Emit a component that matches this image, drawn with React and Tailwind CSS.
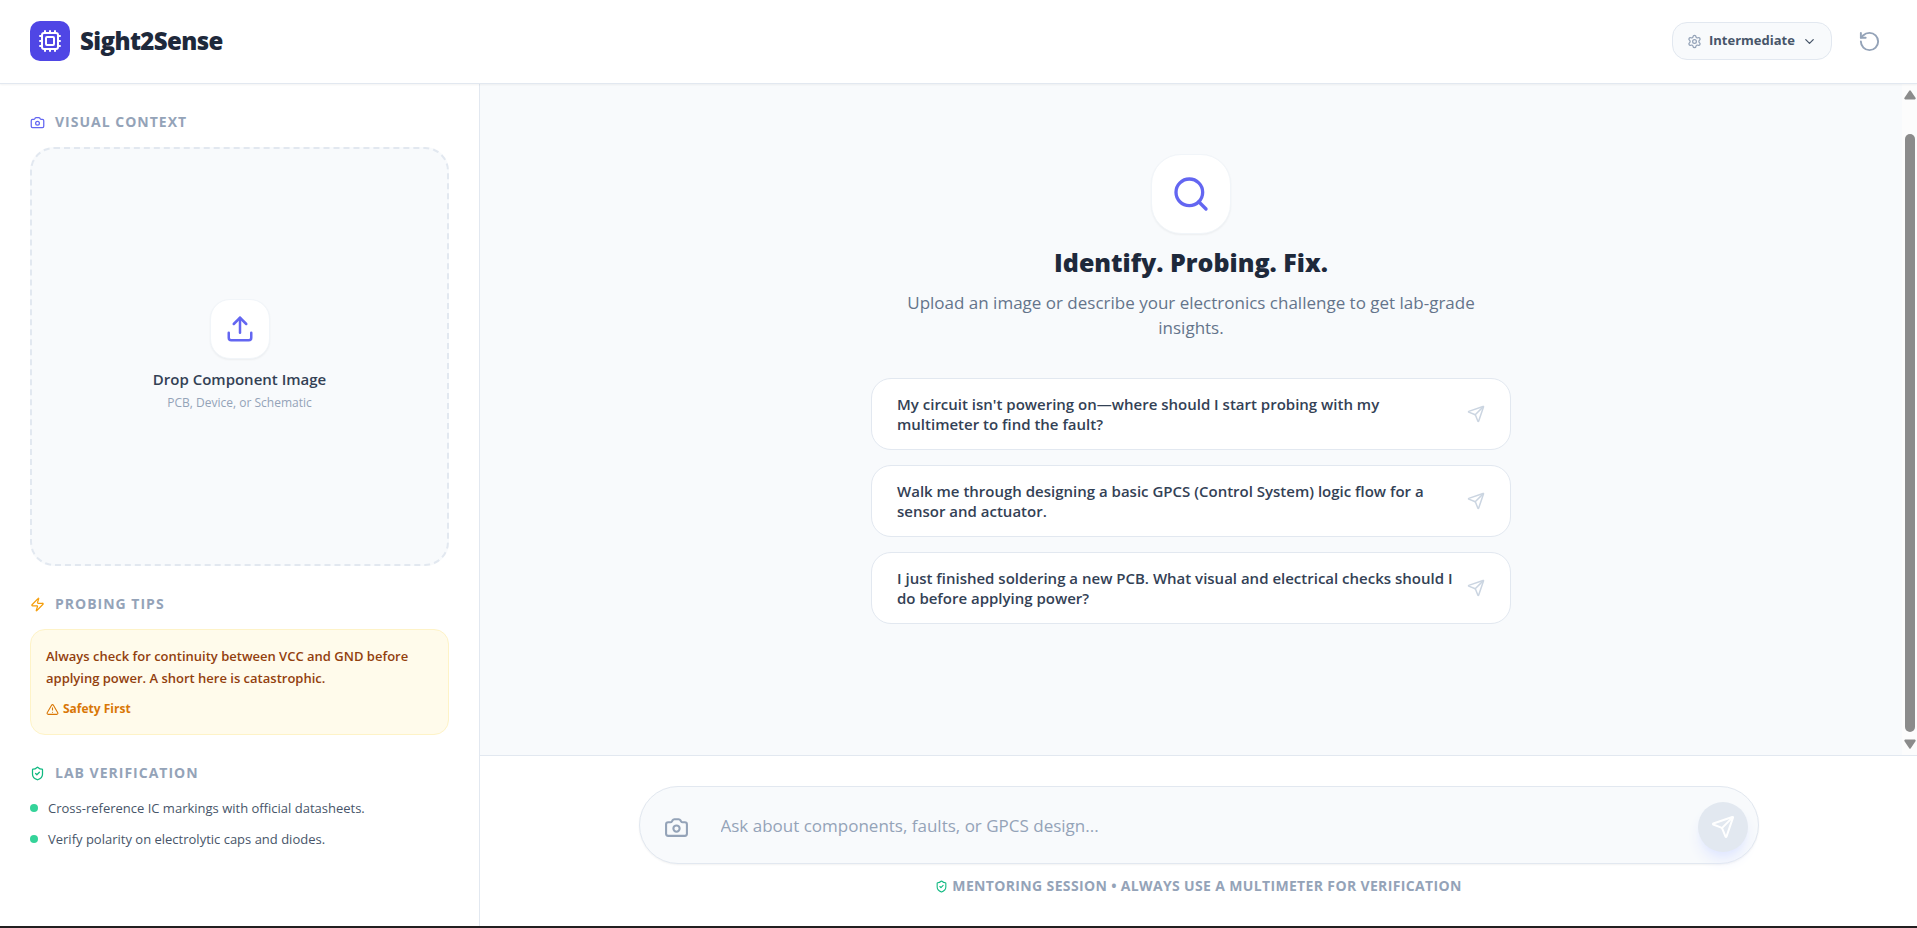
import { useState } from "react";
import {
  Camera,
  ChevronDown,
  Cpu,
  RotateCcw,
  Search,
  Send,
  Settings,
  ShieldCheck,
  TriangleAlert,
  Upload,
  Zap,
} from "lucide-react";

const LEVELS = ["Beginner", "Intermediate", "Advanced"];

const PROMPTS = [
  "My circuit isn't powering on—where should I start probing with my multimeter to find the fault?",
  "Walk me through designing a basic GPCS (Control System) logic flow for a sensor and actuator.",
  "I just finished soldering a new PCB. What visual and electrical checks should I do before applying power?",
];

const CHECKS = [
  "Cross-reference IC markings with official datasheets.",
  "Verify polarity on electrolytic caps and diodes.",
];

function SectionTitle({ icon, children }) {
  return (
    <h2 className="flex items-center gap-[10px] text-sm leading-5 font-bold tracking-[1px] text-[#94a3b8] uppercase">
      {icon}
      {children}
    </h2>
  );
}

function Header() {
  const [level, setLevel] = useState("Intermediate");

  return (
    <header className="z-10 flex h-[84px] shrink-0 items-center justify-between border-b border-[#e2e8f0] bg-white px-[30px] pb-px shadow-xs">
      <div className="flex items-center gap-[10px]">
        <div className="flex size-10 items-center justify-center rounded-[10px] bg-[#4f46e5] text-white">
          <Cpu size={24} />
        </div>
        <h1 className="text-2xl font-extrabold tracking-tight text-[#1e293b]">Sight2Sense</h1>
      </div>

      <div className="flex items-center gap-5">
        <label className="flex h-[38px] items-center gap-[7px] rounded-[15px] border border-[#e2e8f0] bg-[#f8fafc] px-[14px] text-[#475569]">
          <Settings size={15} className="text-[#94a3b8]" />
          <select
            aria-label="Experience level"
            className="appearance-none bg-transparent text-[13px] font-bold outline-none"
            value={level}
            onChange={(e) => setLevel(e.target.value)}
          >
            {LEVELS.map((item) => (
              <option key={item}>{item}</option>
            ))}
          </select>
          <ChevronDown size={15} />
        </label>
        <button aria-label="Reset session" className="p-[6px] text-[#94a3b8] hover:text-[#475569]">
          <RotateCcw size={23} />
        </button>
      </div>
    </header>
  );
}

function Sidebar() {
  return (
    <aside className="flex w-[480px] shrink-0 flex-col gap-7 overflow-hidden border-r border-[#e2e8f0] bg-white px-[30px] py-7">
      <section className="flex flex-col gap-[15px]">
        <SectionTitle icon={<Camera size={15} className="text-[#6366f1]" />}>
          Visual Context
        </SectionTitle>
        <button className="flex aspect-square w-full flex-col items-center justify-center rounded-3xl border-2 border-dashed border-[#e2e8f0] bg-[#f8fafc]">
          <span className="mb-2 flex size-[60px] items-center justify-center rounded-[20px] border border-[#f1f5f9] bg-white text-[#6366f1] shadow-xs">
            <Upload size={30} />
          </span>
          <span className="text-[15px] leading-6 font-semibold text-[#334155]">
            Drop Component Image
          </span>
          <span className="text-xs leading-6 font-medium text-[#94a3b8]">
            PCB, Device, or Schematic
          </span>
        </button>
      </section>

      <section className="flex flex-col gap-[15px]">
        <SectionTitle icon={<Zap size={15} className="text-[#f59e0b]" />}>Probing Tips</SectionTitle>
        <div className="rounded-[15px] border border-[#fef3c7] bg-[#fffbeb] p-[15px]">
          <p className="text-[13px] leading-[22px] font-semibold text-[#92400e]">
            Always check for continuity between VCC and GND before applying power. A short here is
            catastrophic.
          </p>
          <p className="mt-[10px] flex items-center gap-1 text-xs leading-5 font-bold text-[#d97706]">
            <TriangleAlert size={13} />
            Safety First
          </p>
        </div>
      </section>

      <section className="flex flex-col gap-[15px]">
        <SectionTitle icon={<ShieldCheck size={15} className="text-[#10b981]" />}>
          Lab Verification
        </SectionTitle>
        <ul className="flex flex-col gap-[11px]">
          {CHECKS.map((item) => (
            <li key={item} className="flex items-center gap-[10px] text-[13px] leading-5 text-[#475569]">
              <span className="size-2 rounded-full bg-[#34d399]" />
              {item}
            </li>
          ))}
        </ul>
      </section>
    </aside>
  );
}

function ScrollRail() {
  return (
    <div
      aria-hidden="true"
      className="flex w-[15px] shrink-0 flex-col items-center bg-[#fcfcfc] py-[6px] text-[#8b8b8b]"
    >
      <svg width="12" height="10" viewBox="0 0 12 10" fill="currentColor">
        <path d="M5.2.7a1 1 0 0 1 1.6 0l4.7 7.1a1 1 0 0 1-.8 1.6H1.3a1 1 0 0 1-.8-1.6z" />
      </svg>
      <div className="mt-[34px] mb-[7px] w-[10px] flex-1 rounded-full bg-[#8b8b8b]" />
      <svg width="12" height="10" viewBox="0 0 12 10" fill="currentColor">
        <path d="M5.2 9.3a1 1 0 0 0 1.6 0l4.7-7.1a1 1 0 0 0-.8-1.6H1.3a1 1 0 0 0-.8 1.6z" />
      </svg>
    </div>
  );
}

function Welcome({ onPick }) {
  return (
    <div className="flex min-h-0 flex-1 bg-[#f8fafc]">
      <div className="flex flex-1 flex-col items-center overflow-hidden pt-[70px]">
        <div className="flex size-20 items-center justify-center rounded-[30px] border border-[#f1f5f9] bg-white text-[#6366f1] shadow-xs">
          <Search size={40} />
        </div>
        <h2 className="mt-[10px] text-[25px] leading-9 font-extrabold text-[#1e293b]">
          Identify. Probing. Fix.
        </h2>
        <p className="mt-[10px] w-[600px] text-center text-[17px] leading-[25px] font-medium text-[#64748b]">
          Upload an image or describe your electronics challenge to get lab-grade insights.
        </p>
        <div className="mt-[38px] flex w-[640px] flex-col gap-[15px]">
          {PROMPTS.map((prompt) => (
            <button
              key={prompt}
              className="flex items-center justify-between gap-[10px] rounded-[20px] border border-[#e2e8f0] bg-white px-[25px] py-[15px] text-left text-[15px] leading-5 font-semibold text-[#334155] hover:border-[#6366f1]"
              onClick={() => onPick(prompt)}
            >
              {prompt}
              <Send size={18} className="shrink-0 text-[#cbd5e1]" />
            </button>
          ))}
        </div>
      </div>
      <ScrollRail />
    </div>
  );
}

function Composer({ value, onChange }) {
  return (
    <div className="flex shrink-0 flex-col items-center border-t border-[#e2e8f0] bg-white px-[30px] py-[30px]">
      <form
        className="flex h-[78px] w-full max-w-[1120px] items-center rounded-full border border-[#e2e8f0] bg-[#f8fafc] pt-1 pr-[10px] pl-6 shadow-xs"
        onSubmit={(e) => e.preventDefault()}
      >
        <button type="button" aria-label="Attach image" className="text-[#94a3b8]">
          <Camera size={25} />
        </button>
        <input
          type="text"
          aria-label="Message"
          placeholder="Ask about components, faults, or GPCS design..."
          className="h-full min-w-0 flex-1 bg-transparent px-8 pb-1 text-[17px] font-medium text-[#334155] outline-none placeholder:text-[#94a3b8]"
          value={value}
          onChange={(e) => onChange(e.target.value)}
        />
        <button
          aria-label="Send"
          className="flex size-[50px] items-center justify-center rounded-full bg-[#e2e8f0] text-white shadow-lg shadow-[#e0e7ff]"
        >
          <Send size={24} />
        </button>
      </form>
      <p className="mt-3 flex items-center gap-1 text-sm leading-5 font-bold tracking-wide text-[#94a3b8] uppercase">
        <ShieldCheck size={13} className="text-[#10b981]" />
        Mentoring Session • Always use a multimeter for verification
      </p>
    </div>
  );
}

function App() {
  const [message, setMessage] = useState("");

  return (
    <div className="flex h-screen flex-col overflow-hidden border-b-2 border-[#231f20] bg-white font-['Open_Sans',sans-serif]">
      <Header />
      <div className="flex min-h-0 flex-1">
        <Sidebar />
        <main className="flex min-w-0 flex-1 flex-col">
          <Welcome onPick={setMessage} />
          <Composer value={message} onChange={setMessage} />
        </main>
      </div>
    </div>
  );
}

export default App;
